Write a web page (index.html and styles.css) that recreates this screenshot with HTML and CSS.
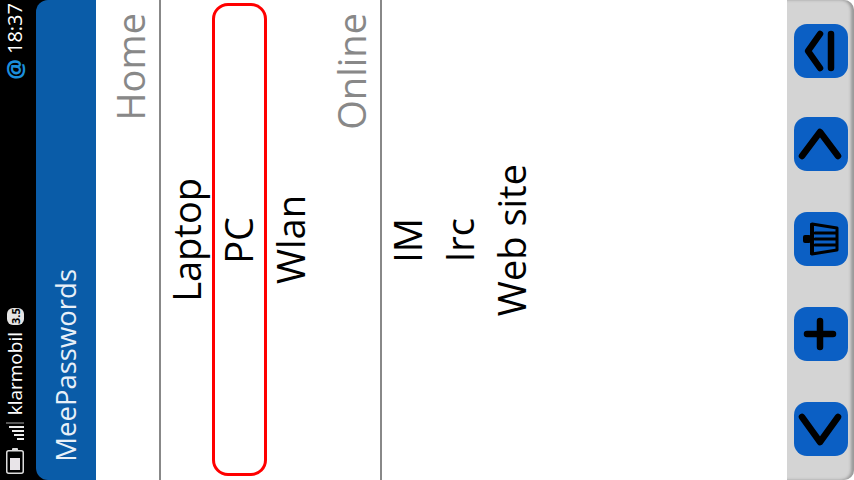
FILE: index.html
```html
<!DOCTYPE html>
<html>
<head>
    <title>MeePasswords</title>
    <link rel="stylesheet" href="styles.css">
</head>
<body>
    <div class="screen">
        <div class="status">
            <div class="status-top">
                <span class="side time">18:37</span>
                <span class="side at">@</span>
            </div>
            <div class="status-bottom">
                <span class="side badge">3.5</span>
                <span class="side operator">klarmobil</span>
                <svg class="signal" width="18" height="18" viewBox="0 0 18 18">
                    <rect x="0" y="0" width="18" height="2" fill="#555"/>
                    <rect x="3" y="4" width="15" height="2" fill="#eee"/>
                    <rect x="6" y="8" width="12" height="2" fill="#eee"/>
                    <rect x="8" y="12" width="10" height="2" fill="#eee"/>
                    <rect x="11" y="16" width="7" height="2" fill="#eee"/>
                </svg>
                <svg class="battery" width="18" height="27" viewBox="0 0 18 27">
                    <rect x="0.75" y="3.75" width="16.5" height="22.5" rx="2" fill="none" stroke="#ddd" stroke-width="1.5"/>
                    <rect x="6" y="1" width="6" height="3" rx="1" fill="#ddd"/>
                    <rect x="4" y="11" width="10" height="12" fill="#e8e4e8"/>
                </svg>
            </div>
        </div>

        <div class="titlebar">
            <span class="side title">MeePasswords</span>
        </div>

        <div class="list">
            <div class="section-head"><span class="side">Home</span></div>
            <div class="item"><span class="side">Laptop</span></div>
            <div class="item selected"><span class="side">PC</span></div>
            <div class="item"><span class="side">Wlan</span></div>
            <div class="section-head"><span class="side">Online</span></div>
            <div class="item"><span class="side">IM</span></div>
            <div class="item"><span class="side">Irc</span></div>
            <div class="item"><span class="side">Web site</span></div>
        </div>

        <div class="toolbar">
            <div class="tool">
                <svg width="54" height="54" viewBox="0 0 54 54"><path d="M26 10 L14 27 L26 44 M37 10 V44"/></svg>
            </div>
            <div class="tool">
                <svg width="54" height="54" viewBox="0 0 54 54"><path d="M8 39 L26 15 L44 39"/></svg>
            </div>
            <div class="tool">
                <svg width="54" height="54" viewBox="0 0 54 54">
                    <path class="thin" d="M18 12 L43 16 V38 L18 42 Z M21 21 H43 M21 27 H43 M21 33 H43"/>
                    <rect x="9" y="23" width="8" height="8" rx="2"/>
                    <rect x="16" y="11" width="4" height="32" rx="1"/>
                </svg>
            </div>
            <div class="tool">
                <svg width="54" height="54" viewBox="0 0 54 54"><path d="M13 27 H39 M26 14 V40"/></svg>
            </div>
            <div class="tool">
                <svg width="54" height="54" viewBox="0 0 54 54"><path d="M8 15 L26 40 L44 15"/></svg>
            </div>
        </div>
    </div>
</body>
</html>
```

FILE: styles.css
```css
html, body {
    margin: 0;
    padding: 0;
    background-color: #000;
}

.screen {
    width: 854px;
    height: 480px;
    display: flex;
    overflow: hidden;
    /* black shows behind the title corners, white behind the toolbar corners */
    background: linear-gradient(90deg, #000 50%, #fff 50%);
    font-family: "Open Sans", sans-serif;
}

/* text on this screen reads bottom to top */
.side {
    display: block;
    writing-mode: vertical-rl;
    transform: rotate(180deg);
    white-space: nowrap;
}

.status {
    width: 36px;
    flex: none;
    box-sizing: border-box;
    padding-right: 6px;
    display: flex;
    flex-direction: column;
    justify-content: space-between;
    align-items: center;
    color: #fff;
}

.status-top {
    display: flex;
    flex-direction: column;
    align-items: center;
    gap: 5px;
    padding-top: 3px;
}

.status-bottom {
    display: flex;
    flex-direction: column;
    align-items: center;
    gap: 7px;
    padding-bottom: 6px;
}

.time {
    font-size: 20px;
    line-height: 24px;
}

.at {
    color: #1b8fdc;
    font-size: 23px;
    font-weight: bold;
    line-height: 24px;
}

.badge {
    width: 17px;
    height: 17px;
    border-radius: 6px;
    background-color: #e4e4e4;
    color: #000;
    font-size: 11px;
    font-weight: bold;
    line-height: 17px;
    text-align: center;
}

.operator {
    font-size: 19px;
    line-height: 22px;
}

.titlebar {
    width: 60px;
    flex: none;
    display: flex;
    flex-direction: column;
    justify-content: flex-end;
    align-items: center;
    background-color: #0a5ca8;
    border-radius: 12px 0 0 12px;
    color: #fff;
}

.title {
    font-size: 27.5px;
    line-height: 40px;
    padding-top: 18px;
    padding-bottom: 18px;
    color: #e8f0f8;
}

.list {
    flex: 1;
    display: flex;
    background-color: #fff;
    color: #000;
}

.section-head {
    width: 65px;
    flex: none;
    box-sizing: border-box;
    display: flex;
    flex-direction: column;
    align-items: center;
    padding-top: 13px;
    padding-left: 5px;
    border-right: 2px solid #888;
    color: #888;
    font-size: 38px;
    line-height: 44px;
}

.item {
    width: 52px;
    flex: none;
    box-sizing: border-box;
    padding-right: 2px;
    position: relative;
    display: flex;
    align-items: center;
    justify-content: center;
    font-size: 38px;
    line-height: 44px;
}

.selected::before {
    content: "";
    position: absolute;
    top: 3px;
    bottom: 4px;
    left: -1px;
    right: -2px;
    border: 3px solid #f00;
    border-radius: 16px;
}

.toolbar {
    width: 67px;
    flex: none;
    box-sizing: border-box;
    display: flex;
    flex-direction: column;
    gap: 41px;
    align-items: flex-start;
    padding: 24px 0 24px 7px;
    background-color: #d4d4d4;
    border-radius: 0 10px 10px 0;
    box-shadow: inset -3px 0 3px #999;
}

.tool {
    width: 54px;
    height: 54px;
    border-radius: 13px;
    background-color: #0b5fc4;
}

.tool:first-child {
    margin-bottom: -2px;
}

.tool svg {
    display: block;
}

.tool path {
    fill: none;
    stroke: #000;
    stroke-width: 6.5;
    stroke-linecap: round;
    stroke-linejoin: round;
}

.tool path.thin {
    stroke-width: 3;
}

.tool rect {
    fill: #000;
}
```
